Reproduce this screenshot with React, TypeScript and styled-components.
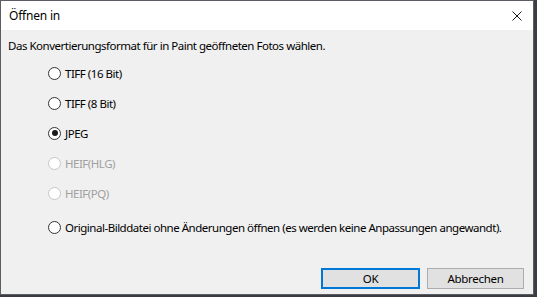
import React, { useState } from "react";
import styled, { createGlobalStyle } from "styled-components";

const Global = createGlobalStyle`
  html, body {
    margin: 0;
    padding: 0;
    background: #3b3d42;
  }
  body {
    font-family: "Noto Sans", "Open Sans", sans-serif;
  }
`;

type Option = { id: string; label: string; disabled?: boolean };

const options: Option[] = [
    { id: "tiff16", label: "TIFF (16 Bit)" },
    { id: "tiff8", label: "TIFF (8 Bit)" },
    { id: "jpeg", label: "JPEG" },
    { id: "hlg", label: "HEIF(HLG)", disabled: true },
    { id: "pq", label: "HEIF(PQ)", disabled: true },
    { id: "orig", label: "Original-Bilddatei ohne Änderungen öffnen (es werden keine Anpassungen angewandt)." }
];

export default () => {
    const [value, setValue] = useState("jpeg");

    return (
        <>
            <Global />
            <Screen>
                <Window>
                    <TitleBar>
                        <Title>Öffnen in</Title>
                        <CloseButton type="button" aria-label="Schließen">
                            <svg width="10" height="10" viewBox="0 0 10 10">
                                <path d="M0.5 0.5 L9.5 9.5 M9.5 0.5 L0.5 9.5" stroke="#1a1a1a" strokeWidth="1" />
                            </svg>
                        </CloseButton>
                    </TitleBar>
                    <Body>
                        <Intro>Das Konvertierungsformat für in Paint geöffneten Fotos wählen.</Intro>
                        <Options>
                            {options.map((o, i) => (
                                <Row key={o.id} $last={i === options.length - 1} $disabled={!!o.disabled}
                                    onClick={() => !o.disabled && setValue(o.id)}>
                                    <Circle $disabled={!!o.disabled}>
                                        {value === o.id && <Dot />}
                                    </Circle>
                                    <Label $disabled={!!o.disabled}>{o.label}</Label>
                                </Row>
                            ))}
                        </Options>
                        <Footer>
                            <Button type="button" $primary>OK</Button>
                            <Button type="button">Abbrechen</Button>
                        </Footer>
                    </Body>
                </Window>
            </Screen>
        </>
    );
};

const Screen = styled.div`
  width: 537px;
  height: 297px;
  padding: 1px 4px 3px 1px;
  box-sizing: border-box;
`;

const Window = styled.div`
  width: 532px;
  height: 293px;
  display: flex;
  flex-direction: column;
  background: #f0f0f0;
  box-shadow: 0 0 0 1px #5a5d63;
`;

const TitleBar = styled.div`
  height: 29px;
  flex: none;
  display: flex;
  align-items: center;
  justify-content: space-between;
  background: #ffffff;
  padding: 0 5px 0 8px;
`;

const Title = styled.span`
  font-size: 12px;
  letter-spacing: -0.2px;
  color: #000;
`;

const CloseButton = styled.button`
  width: 22px;
  height: 29px;
  border: none;
  background: transparent;
  display: flex;
  align-items: center;
  justify-content: center;
  padding: 0;
`;

const Body = styled.div`
  flex: 1;
  display: flex;
  flex-direction: column;
  padding: 8px 9px 6px 7px;
`;

const Text = styled.span`
  font-size: 11.5px;
  letter-spacing: -0.48px;
  white-space: nowrap;
`;

const Intro = styled(Text)`
  display: block;
  color: #000;
  height: 16px;
  line-height: 16px;
`;

const Options = styled.div`
  display: flex;
  flex-direction: column;
  padding: 11px 0 0 40px;
`;

const Row = styled.div<{ $last: boolean; $disabled: boolean }>`
  display: flex;
  align-items: center;
  gap: 4px;
  height: 16px;
  margin-bottom: ${(p) => (p.$last ? "0" : "14px")};
  margin-top: ${(p) => (p.$last ? "4px" : "0")};
  cursor: ${(p) => (p.$disabled ? "default" : "pointer")};
`;

const Circle = styled.span<{ $disabled: boolean }>`
  width: 11px;
  height: 11px;
  border-radius: 50%;
  border: 1px solid ${(p) => (p.$disabled ? "#c6c6c6" : "#333333")};
  background: #ffffff;
  display: flex;
  align-items: center;
  justify-content: center;
  flex: none;
`;

const Dot = styled.span`
  width: 6px;
  height: 6px;
  border-radius: 50%;
  background: #1a1a1a;
`;

const Label = styled(Text)<{ $disabled: boolean }>`
  color: ${(p) => (p.$disabled ? "#a0a0a0" : "#000")};
`;

const Footer = styled.div`
  margin-top: auto;
  display: flex;
  justify-content: flex-end;
  gap: 7px;
`;

const Button = styled.button<{ $primary?: boolean }>`
  width: ${(p) => (p.$primary ? "99px" : "97px")};
  height: 21px;
  margin-bottom: -1px;
  box-sizing: border-box;
  background: #e1e1e1;
  border: ${(p) => (p.$primary ? "2px solid #0078d7" : "1px solid #adadad")};
  font-family: "Noto Sans", "Open Sans", sans-serif;
  font-size: 11.5px;
  letter-spacing: -0.3px;
  color: #000;
  padding: 0;
`;
